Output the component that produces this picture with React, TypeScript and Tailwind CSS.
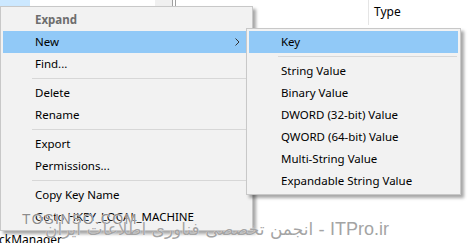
import React from "react";

const font = { fontFamily: '"Noto Sans", "Open Sans", sans-serif' };

function Item({ label, active, bold, grey, arrow }: { label: string; active?: boolean; bold?: boolean; grey?: boolean; arrow?: boolean }) {
  return (
    <div
      className={`flex h-[22px] items-center justify-between pl-[32px] pr-[10px] text-[11.5px] leading-none ${active ? "bg-[#91c9f7]" : ""} ${bold ? "font-bold" : ""} ${grey ? "text-[#6d6d6d]" : "text-black"}`}
    >
      <span>{label}</span>
      {arrow && (
        <svg width="5" height="8" viewBox="0 0 5 8">
          <path d="M0.5 0.5 L4 4 L0.5 7.5" fill="none" stroke="#333" strokeWidth="1" />
        </svg>
      )}
    </div>
  );
}

function Sep() {
  return <div className="ml-[29px] mr-[1px] my-[3px] h-px bg-[#d7d7d7]" />;
}

export default function App() {
  return (
    <div className="relative h-[243px] w-[473px] overflow-hidden bg-white text-black" style={font}>
      {/* background window */}
      <div className="flex h-full">
        <div className="flex w-[155px] flex-col justify-between">
          <div className="h-[6px] w-[30px] bg-[#cce8ff]" />
          <div className="-ml-px text-[12px] leading-[7px]">ckManager</div>
        </div>
        <div className="h-[6px] w-[17px] bg-[#f0f0f0]" />
        <div className="h-[6px] w-px bg-[#a0a0a0]" />
        <div className="w-[2px]" />
        <div className="h-[6px] w-px bg-[#a0a0a0]" />
        <div className="flex h-[25px] flex-1">
          <div className="w-[193px] border-r border-[#e5e5e5]" />
          <div className="pl-[5px] pt-[4px] text-[12px] leading-[16px]">Type</div>
        </div>
      </div>

      {/* main context menu */}
      <div className="absolute left-0 top-[6px] w-[253px] border border-[#c8c8c8] bg-[#f2f2f2] p-[2px] shadow-[3px_3px_3px_rgba(0,0,0,0.35)]">
        <Item label="Expand" bold grey />
        <Item label="New" active arrow />
        <Item label="Find..." />
        <Sep />
        <Item label="Delete" />
        <Item label="Rename" />
        <Sep />
        <Item label="Export" />
        <Item label="Permissions..." />
        <Sep />
        <Item label="Copy Key Name" />
        <Item label="Go to HKEY_LOCAL_MACHINE" />
      </div>

      {/* submenu */}
      <div className="absolute left-[246px] top-[28px] w-[215px] border border-[#c8c8c8] bg-[#f2f2f2] p-[2px] shadow-[3px_3px_3px_rgba(0,0,0,0.35)]">
        <Item label="Key" active />
        <Sep />
        <Item label="String Value" />
        <Item label="Binary Value" />
        <Item label="DWORD (32-bit) Value" />
        <Item label="QWORD (64-bit) Value" />
        <Item label="Multi-String Value" />
        <Item label="Expandable String Value" />
      </div>

      {/* watermark */}
      <div className="absolute left-[22px] top-[211px] flex flex-col items-start">
        <div
          className="text-[14px] leading-[16px] tracking-[1.5px] text-[#8c8c8c]"
          style={{ fontFamily: '"Liberation Sans", sans-serif', textShadow: "0 0 1px #fff, 0 0 1px #fff" }}
        >
          TOSINSO.COM
        </div>
        <div
          className="-mt-[8px] ml-[23px] whitespace-nowrap text-[17px] leading-[20px] text-[#a4a4a4]"
          style={{ fontFamily: '"DejaVu Sans", "Liberation Sans", sans-serif', textShadow: "0 0 1px #fff" }}
        >
          انجمن تخصصی فناوری اطلاعات ایران -{" "}
          <span className="text-[18px]" style={{ fontFamily: '"Liberation Sans", sans-serif' }}>
            ITPro.ir
          </span>
        </div>
      </div>
    </div>
  );
}
